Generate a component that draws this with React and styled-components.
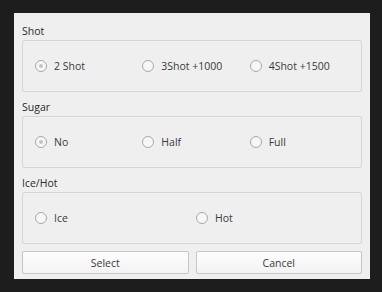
import React from "react";
import styled, { createGlobalStyle } from "styled-components";

const Global = createGlobalStyle`
  html, body {
    margin: 0;
    background: #1d1d1d;
  }
  body {
    font-family: "Open Sans", "Noto Sans", sans-serif;
  }
`;

const Screen = styled.div`
  width: 382px;
  height: 292px;
  box-sizing: border-box;
  padding: 13px 12px 13px 14px;
  background: #1d1d1d;
`;

const Dialog = styled.div`
  height: 266px;
  box-sizing: border-box;
  background: #efefef;
  padding: 11px 8px 6px 8px;
  display: flex;
  flex-direction: column;
`;

const GroupTitle = styled.div`
  font-size: 10.5px;
  color: #2a2a2a;
  height: 16px;
  line-height: 14px;
`;

const GroupBox = styled.div`
  height: 52px;
  box-sizing: border-box;
  border: 1px solid #d6d6d6;
  border-radius: 2px;
  display: grid;
  grid-template-columns: repeat(${(p) => p.cols}, 1fr);
  align-items: center;
  padding: 0 4px 0 12px;
  margin-bottom: 8px;
`;

const Option = styled.label`
  display: flex;
  align-items: center;
  gap: 7px;
  font-size: 10.5px;
  color: #3a3a3a;
`;

const Circle = styled.span`
  width: 10px;
  height: 10px;
  border-radius: 50%;
  border: 1px solid #a9a9a9;
  background: #f7f7f7;
  display: flex;
  align-items: center;
  justify-content: center;
  &::after {
    content: "";
    width: 4px;
    height: 4px;
    border-radius: 50%;
    background: ${(p) => (p.checked ? "#c4c4c4" : "transparent")};
  }
`;

const Buttons = styled.div`
  display: grid;
  grid-template-columns: 1fr 1fr;
  gap: 7px;
  margin-top: -1px;
`;

const Button = styled.button`
  height: 23px;
  border: 1px solid #c6c6c6;
  border-radius: 2px;
  background: linear-gradient(#fdfdfd, #f3f3f3);
  font-family: "Open Sans", "Noto Sans", sans-serif;
  font-size: 10.5px;
  color: #3a3a3a;
  padding: 0;
`;

const groups = [
  { title: "Shot", cols: 3, options: ["2 Shot", "3Shot +1000", "4Shot +1500"], checked: 0 },
  { title: "Sugar", cols: 3, options: ["No", "Half", "Full"], checked: 0 },
  { title: "Ice/Hot", cols: 2, options: ["Ice", "Hot"], checked: -1 },
];

export default function App() {
  return (
    <Screen>
      <Global />
      <Dialog>
        {groups.map((g) => (
          <div key={g.title}>
            <GroupTitle>{g.title}</GroupTitle>
            <GroupBox cols={g.cols}>
              {g.options.map((o, i) => (
                <Option key={o}>
                  <Circle checked={i === g.checked} />
                  {o}
                </Option>
              ))}
            </GroupBox>
          </div>
        ))}
        <Buttons>
          <Button>Select</Button>
          <Button>Cancel</Button>
        </Buttons>
      </Dialog>
    </Screen>
  );
}
